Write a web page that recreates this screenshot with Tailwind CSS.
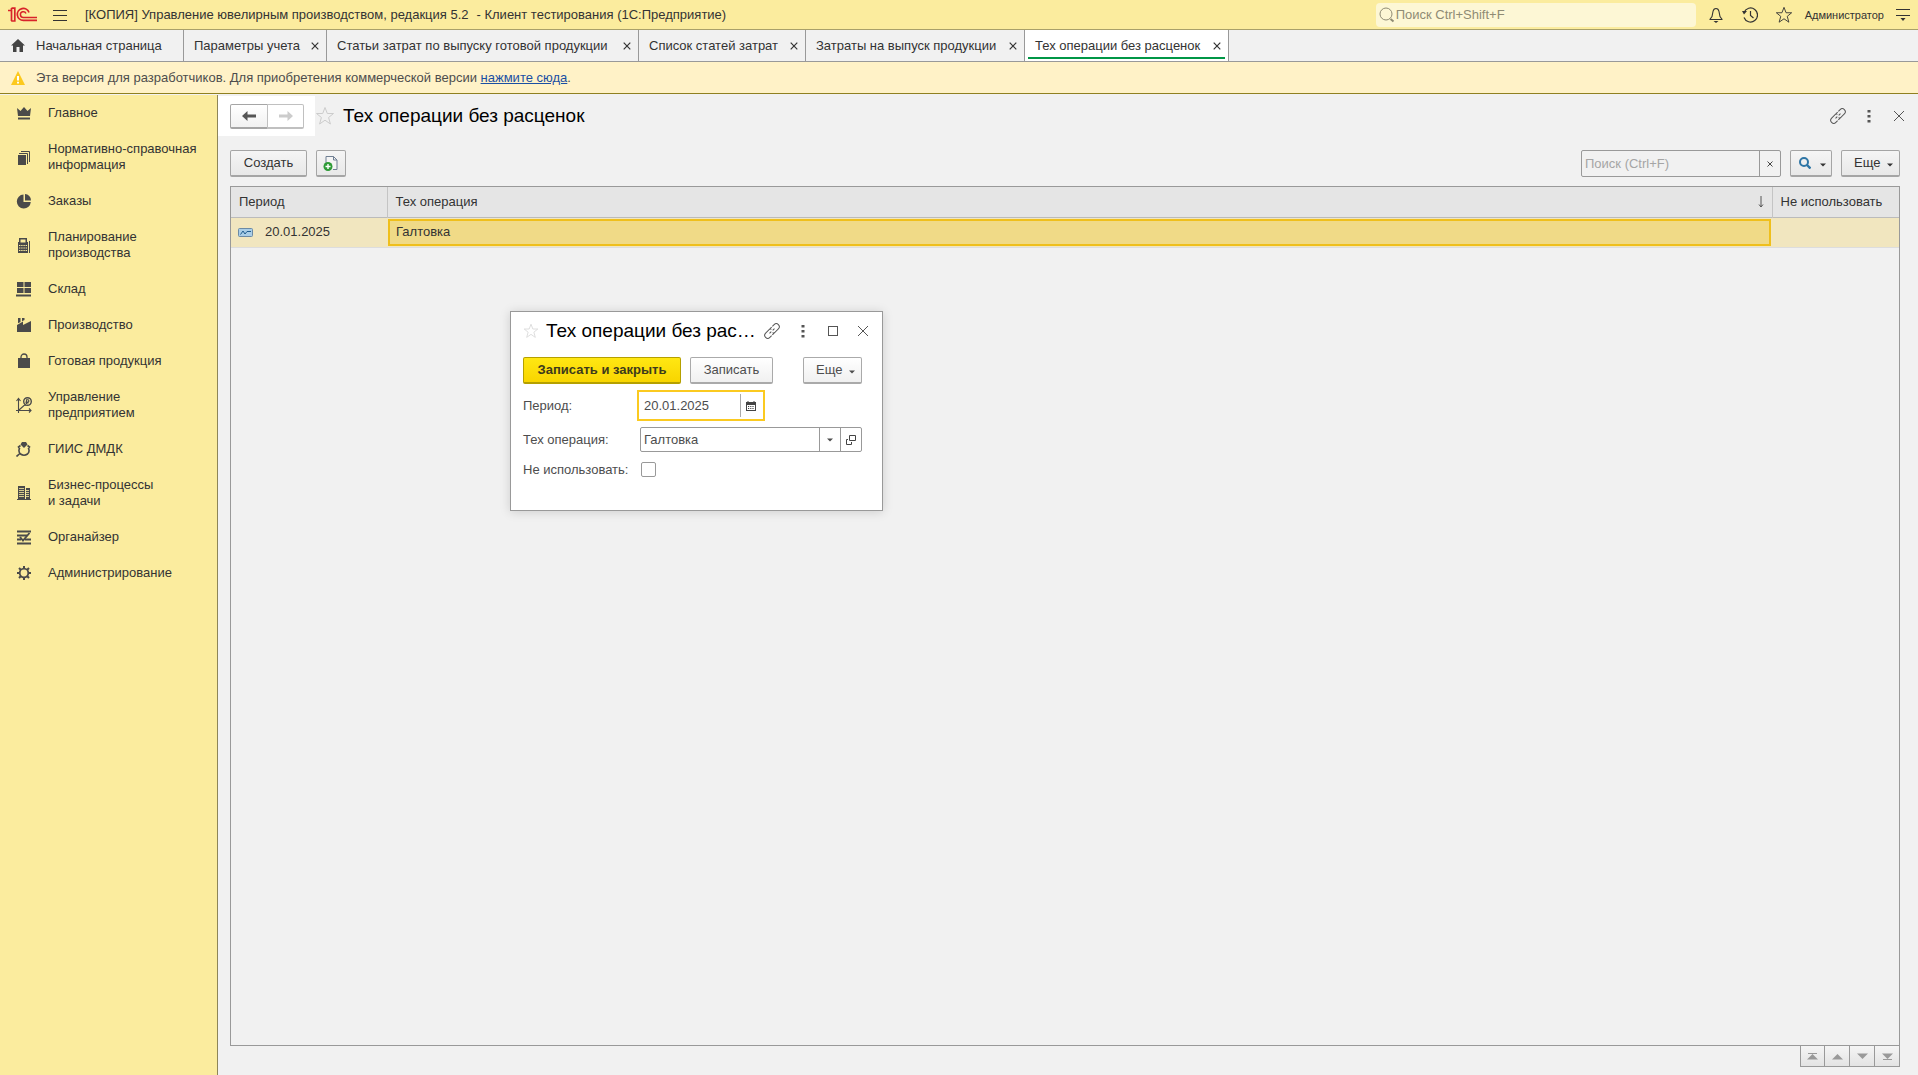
<!DOCTYPE html>
<html lang="ru">
<head>
<meta charset="utf-8">
<title>Тех операции без расценок</title>
<script src="https://cdn.jsdelivr.net/npm/@tailwindcss/browser@4"></script>
</head>
<body class="flex h-screen flex-col overflow-hidden bg-[#f1f1f1] font-['Liberation_Sans',Arial,sans-serif] text-[13px] leading-4 text-[#333]">
<svg class="hidden">
  <symbol id="star" viewBox="0 0 20 20"><path d="M10 1.500l2.300 6h6.200l-4.900 4 1.800 6.500-5.400-3.800L4.600 18l1.800-6.500-4.900-4h6.200z" fill="none" stroke="currentColor" stroke-linejoin="miter"/></symbol>
  <symbol id="link" viewBox="0 0 16 16"><g fill="none" stroke="currentColor" transform="rotate(-45 8 8)"><path d="M7.500 5.500V5H2a3 3 0 0 0 0 6h2.500M5.500 11h2v-1.500"/><path d="M8.500 10.500V11H14a3 3 0 0 0 0-6h-2.500M10.500 5h-2v1.500"/><path d="M4.500 8h2.500M9 8h2.500"/></g></symbol>
  <symbol id="dots" viewBox="0 0 4 14"><path d="M.5 1h3v2.500h-3zM.5 6h3v2.500h-3zM.5 11h3v2.500h-3z" fill="currentColor"/></symbol>
  <symbol id="cross" viewBox="0 0 12 12"><path d="M1 1l10 10M11 1L1 11" fill="none" stroke="currentColor"/></symbol>
  <symbol id="tabcross" viewBox="0 0 8 8"><path d="M.7.7l6.600 6.600M7.300.7L.7 7.300" fill="none" stroke="currentColor" stroke-width="1.200"/></symbol>
  <symbol id="caret" viewBox="0 0 6 4"><path d="M0 .5h6L3 3.500z" fill="currentColor"/></symbol>
</svg>

<header class="flex h-[30px] shrink-0 items-center border-b border-[#a8a06a] bg-[#fbec9e] pr-2 pl-2">
  <svg class="h-[15px] w-[30px] shrink-0" viewBox="0 0 30 15" fill="none" stroke="#d8232a"><path d="M0 3.500h4M3.500 1v13M3.500 1.200h3.300V14H3.200" stroke-width="1.700"/><path d="M21 5.500A6 6 0 1 0 15.500 13.400H29" stroke-width="1.700"/><path d="M18 6.500a2.900 2.900 0 1 0-2.700 4H29" stroke-width="1.500"/></svg>
  <button aria-label="Меню" class="ml-[15px]"><svg class="h-3 w-[14px]" viewBox="0 0 14 12"><path d="M0 1.500h14M0 6.500h14M0 11.500h14" stroke="#333"/></svg></button>
  <div class="ml-[18px] flex gap-2 whitespace-nowrap"><span>[КОПИЯ] Управление ювелирным производством, редакция 5.2</span><span>- Клиент тестирования (1С:Предприятие)</span></div>
  <label class="ml-auto flex h-6 w-[320px] items-center rounded-sm bg-[#fdf7d5] pl-[3px] text-[#8f8b74]">
    <svg class="h-4 w-4 shrink-0" viewBox="0 0 16 16" fill="none" stroke="currentColor"><circle cx="7" cy="7" r="6"/><path d="M11.500 12l3 2.500" stroke-width="2"/></svg>
    <input type="text" aria-label="Поиск" placeholder="Поиск Ctrl+Shift+F" class="min-w-0 flex-1 pl-px outline-none placeholder:text-[#8f8b74]">
  </label>
  <button aria-label="Уведомления" class="ml-[12px]"><svg class="h-4 w-4" viewBox="0 0 16 16" fill="none" stroke="#333" stroke-width="1.100"><path d="M1.500 12.500h13M2 12.300L4 9.500 5 4.500Q5.600 1.500 8 1.500t3 3l1 5 2 2.800"/><path d="M5.500 14h5L8 16z" fill="#333" stroke="none"/></svg></button>
  <button aria-label="История" class="ml-[18px]"><svg class="h-4 w-4" viewBox="0 0 16 16" fill="none" stroke="#333" stroke-width="1.200"><path d="M2 5.500a7 7 0 1 1 0 5" /><path d="M8.500 4v4.500l3 2.500"/><path d="M0 4h5L2 7.500z" fill="#333" stroke="none"/></svg></button>
  <button aria-label="Избранное" class="ml-[17px] text-[#333]"><svg class="h-[18px] w-[18px]"><use href="#star"/></svg></button>
  <a href="#" class="ml-3 text-[11px]">Администратор</a>
  <button aria-label="Настройки" class="ml-[12px]"><svg class="h-3 w-[14px]" viewBox="0 0 14 12"><path d="M0 .5h14M0 6.500h14" stroke="#333"/><path d="M4.500 9h5L7 12z" fill="#333"/></svg></button>
</header>

<nav class="flex h-8 shrink-0 border-b border-[#999] whitespace-nowrap">
  <a href="#" class="flex w-[184px] items-center gap-[11px] border-r border-[#999] pl-[11px]"><svg class="h-[13px] w-[14px]" viewBox="0 0 14 13"><path d="M7 0l7 6.500h-2V13H8.500V8h-3v5H2V6.500H0z" fill="#444"/></svg>Начальная страница</a>
  <a href="#" class="flex w-[143px] items-center justify-between border-r border-[#999] pr-[7px] pl-[10px]">Параметры учета<svg class="h-2 w-2"><use href="#tabcross"/></svg></a>
  <a href="#" class="flex w-[312px] items-center justify-between border-r border-[#999] pr-[7px] pl-[10px]">Статьи затрат по выпуску готовой продукции<svg class="h-2 w-2"><use href="#tabcross"/></svg></a>
  <a href="#" class="flex w-[167px] items-center justify-between border-r border-[#999] pr-[7px] pl-[10px]">Список статей затрат<svg class="h-2 w-2"><use href="#tabcross"/></svg></a>
  <a href="#" class="flex w-[219px] items-center justify-between border-r border-[#999] pr-[7px] pl-[10px]">Затраты на выпуск продукции<svg class="h-2 w-2"><use href="#tabcross"/></svg></a>
  <a href="#" class="flex w-[204px] border-r border-[#999] bg-white px-[3px] pb-[2px]"><span class="flex flex-1 items-center justify-between border-b-2 border-[#009646] pt-1 pr-1 pl-[7px]">Тех операции без расценок<svg class="h-2 w-2"><use href="#tabcross"/></svg></span></a>
</nav>

<div class="flex h-8 shrink-0 items-center gap-[11px] border-b border-[#8f8020] bg-[#fff2c7] pl-[11px] text-[#4d4d4d]">
  <svg class="h-[14px] w-[14px]" viewBox="0 0 14 14"><path d="M7 0l7 14H0z" fill="#fcc91e"/><path d="M6 5h2v4.500H6zM6 10.700h2v1.800H6z" fill="#fff"/></svg>
  <p>Эта версия для разработчиков. Для приобретения коммерческой версии <a href="#" class="text-[#1a4fa3] underline">нажмите сюда</a>.</p>
</div>

<div class="flex min-h-0 flex-1 pt-px">
  <aside class="w-[218px] shrink-0 border-r border-[#8d8558] bg-[#fbec9e] pt-[10px] text-[#333]">
    <ul class="flex flex-col gap-5 pl-4 [&_a]:flex [&_a]:items-center [&_a]:gap-4 [&_svg]:h-4 [&_svg]:w-4 [&_svg]:shrink-0 [&_svg]:text-[#4a4a4a]">
      <li><a href="#"><svg viewBox="0 0 16 16" fill="currentColor"><path d="M1 3l3.500 3L8 2l3.500 4L15 3l-1 8H2zM2 12.500h12v2H2z"/></svg>Главное</a></li>
      <li><a href="#"><svg viewBox="0 0 16 16"><path d="M2 6h8v10H2z" fill="currentColor"/><path d="M3 4.500h8.500V15M5 2.500h8.500V13" fill="none" stroke="currentColor"/></svg><span>Нормативно-справочная<br>информация</span></a></li>
      <li><a href="#"><svg viewBox="0 0 16 16" fill="currentColor"><path d="M7.500 1.500a7 7 0 1 0 7.300 7.500H7.500z"/><path d="M9 1v6.500h6A6.500 6.500 0 0 0 9 1z"/></svg>Заказы</a></li>
      <li><a href="#"><svg viewBox="0 0 16 16"><path d="M3 1h8v4h1v11H2V5h1z" fill="currentColor"/><path d="M4.500 2.500h5v3h-5z" fill="#fbec9e"/><path d="M3 8.500h8M3 11h8M3 13.500h8" stroke="#fbec9e" stroke-width="1.200" stroke-dasharray="1.400 .8"/><path d="M13.500 4v12" stroke="currentColor"/></svg><span>Планирование<br>производства</span></a></li>
      <li><a href="#"><svg viewBox="0 0 16 16" fill="currentColor"><path d="M1 1h6.500v5H1zM8.500 1H15v5H8.500zM1 7h6.500v5H1zM8.500 7H15v5H8.500zM0 13.500h15v2H0z"/></svg>Склад</a></li>
      <li><a href="#"><svg viewBox="0 0 16 16" fill="currentColor"><path d="M1 15V8l6-3.500V8l8-4v11z"/><path d="M2 1h2.500v4L2 6.300zM6 1h2.500v2L6 4.300z"/></svg>Производство</a></li>
      <li><a href="#"><svg viewBox="0 0 16 16"><path d="M2 5h12v10H2z" fill="currentColor"/><path d="M5 7V4a3 3 0 0 1 6 0V7" fill="none" stroke="currentColor" stroke-width="1.300"/></svg>Готовая продукция</a></li>
      <li><a href="#"><svg viewBox="0 0 16 16" fill="none" stroke="currentColor" stroke-width="1.100"><path d="M2.500 16V2M0 13.500h15M3 13l5-4.500 2-.5M.5 4l2-2.500 2 2.500M13 11.500l2 2-2 2"/><circle cx="11.500" cy="4.500" r="3.800" stroke-width="1.400"/><path d="M10.500 7V2.800h1.800q1.200 1.200 0 2.200H9.500M9.500 6h3"/></svg><span>Управление<br>предприятием</span></a></li>
      <li><a href="#"><svg viewBox="0 0 16 16"><path d="M4.500 4.500L2.500 6l1 1.500Q2 10.500 4.500 13 8 15.500 11.500 13 14 10.500 12.500 7.500l1-1.500-2-1.500M4.500 12L.5 15.500" fill="none" stroke="currentColor" stroke-width="1.600"/><path d="M6 1h4l1.500 2.500L8 7 4.500 3.500z" fill="currentColor"/></svg>ГИИС ДМДК</a></li>
      <li><a href="#"><svg viewBox="0 0 16 16"><path d="M2 1h7v13H2zM10 3h4v11h-4zM1 14h14v1H1z" fill="currentColor"/><path d="M3 3.500h5M3 5.500h5M3 7.500h5M3 9.500h5M3 11.500h5M10 5.500h3M10 7.500h3M10 9.500h3M10 11.500h3" stroke="#fbec9e" stroke-width=".8"/></svg><span>Бизнес-процессы<br>и задачи</span></a></li>
      <li><a href="#"><svg viewBox="0 0 16 16" fill="none" stroke="currentColor" stroke-width="1.900"><path d="M1 2.500h14M1 6.500h10M1 10.500h4M9 10.500h6M1 14.500h14"/><path d="M4 8l3 3.500L13.500 4"/></svg>Органайзер</a></li>
      <li><a href="#"><svg viewBox="0 0 16 16" fill="none" stroke="currentColor"><circle cx="8" cy="8" r="4.300" stroke-width="1.800"/><path d="M8 1v2.500M8 12.500V15M1 8h2.500M12.500 8H15M3 3l2 2M11 11l2 2M13 3l-2 2M5 11l-2 2" stroke-width="2"/></svg>Администрирование</a></li>
    </ul>
  </aside>

  <main class="flex min-w-0 flex-1 flex-col pt-px pr-[18px] pb-2">
    <div class="flex h-10 shrink-0 items-center">
      <div class="flex h-10 w-[97px] items-center bg-white pl-3">
        <button aria-label="Назад" class="flex h-[25px] w-[38px] items-center justify-center rounded-l-xs border border-b-2 border-[#a5a5a5] bg-linear-to-b from-white to-[#f1f1f1]"><svg class="h-3 w-[14px]" viewBox="0 0 14 12"><path d="M0 6l5.500-5v3.500H14v3H5.500V11z" fill="#555"/></svg></button>
        <button aria-label="Вперед" disabled class="-ml-px flex h-[25px] w-[37px] items-center justify-center rounded-r-xs border border-b-2 border-[#c0c0c0] bg-white"><svg class="h-3 w-[14px]" viewBox="0 0 14 12"><path d="M14 6L8.500 1v3.500H0v3h8.500V11z" fill="#ccc"/></svg></button>
      </div>
      <button aria-label="В избранное" class="text-[#ccc]"><svg class="h-5 w-5"><use href="#star"/></svg></button>
      <h1 class="ml-2 text-[19px] leading-6 text-black">Тех операции без расценок</h1>
      <div class="-mr-2 ml-auto flex items-center text-[#555]">
        <button aria-label="Ссылка"><svg class="h-4 w-4"><use href="#link"/></svg></button>
        <button aria-label="Действия" class="ml-[21px]"><svg class="h-[14px] w-1"><use href="#dots"/></svg></button>
        <button aria-label="Закрыть" class="mr-[3px] ml-[22px]"><svg class="h-3 w-3"><use href="#cross"/></svg></button>
      </div>
    </div>

    <div class="mt-[14px] ml-3 flex h-[27px] shrink-0 items-stretch">
      <button class="w-[77px] rounded-xs border border-b-2 border-[#a5a5a5] bg-linear-to-b from-[#f5f5f5] to-[#e8e8e8]">Создать</button>
      <button aria-label="Создать копированием" class="ml-[9px] flex w-[30px] items-center justify-center rounded-xs border border-b-2 border-[#a5a5a5] bg-linear-to-b from-[#f5f5f5] to-[#e8e8e8]"><svg class="h-4 w-4" viewBox="0 0 16 16"><path d="M3 8V1.500h7.500L14 5v9.500h-4" fill="#f4f4f4" stroke="#6f7f93"/><path d="M10.500 1.500V5H14" fill="none" stroke="#6f7f93"/><circle cx="5" cy="11.500" r="4.500" fill="#2c9a35"/><path d="M5 9v5M2.500 11.500h5" stroke="#fff" stroke-width="1.400"/></svg></button>
      <div class="ml-auto flex w-[200px] rounded-xs border border-[#999]">
        <input type="text" aria-label="Поиск по списку" placeholder="Поиск (Ctrl+F)" class="min-w-0 flex-1 pl-[3px] outline-none placeholder:text-[#a5a5a5]">
        <button aria-label="Очистить" class="flex w-[21px] items-center justify-center border-l border-[#999]"><svg class="h-[6px] w-[6px]" viewBox="0 0 12 12"><path d="M1 1l10 10M11 1L1 11" stroke="#444" stroke-width="2"/></svg></button>
      </div>
      <button aria-label="Найти" class="ml-[9px] flex w-[42px] items-center gap-[9px] rounded-xs border border-b-2 border-[#a5a5a5] bg-linear-to-b from-[#f5f5f5] to-[#e8e8e8] pl-2"><svg class="h-3 w-3" viewBox="0 0 12 12" fill="none" stroke="#2e75a5"><circle cx="5" cy="5" r="4" stroke-width="2"/><path d="M8 8l3.500 3.500" stroke-width="2.400"/></svg><svg class="mt-1 h-1 w-[6px]"><use href="#caret"/></svg></button>
      <button class="ml-[9px] flex w-[59px] items-center gap-[7px] rounded-xs border border-b-2 border-[#a5a5a5] bg-linear-to-b from-[#f5f5f5] to-[#e8e8e8] pl-3">Еще<svg class="mt-1 h-1 w-[6px]"><use href="#caret"/></svg></button>
    </div>

    <div class="mt-[9px] ml-3 min-h-0 flex-1 border border-[#999]">
      <table class="w-full table-fixed border-collapse text-left">
        <colgroup><col class="w-[156px]"><col><col class="w-[127px]"></colgroup>
        <thead class="bg-[#e5e5e5]">
          <tr class="h-[30px] border-b border-[#bbb]">
            <th class="border-r border-[#c4c4c4] pl-2 font-normal">Период</th>
            <th class="border-r border-[#c4c4c4] pr-2 pl-2 font-normal"><span class="flex items-center justify-between">Тех операция<svg class="h-3 w-[6px]" viewBox="0 0 6 12"><path d="M3 0v11M1 8.500l2 2.500 2-2.500" fill="none" stroke="#555"/></svg></span></th>
            <th class="pl-2 font-normal whitespace-nowrap">Не использовать</th>
          </tr>
        </thead>
        <tbody>
          <tr class="h-[30px] border-b border-[#ddd] bg-[#f1e6bf]">
            <td class="pl-[7px]"><span class="flex items-center gap-3"><svg class="h-[9px] w-[15px]" viewBox="0 0 15 9"><rect x=".5" y=".5" width="14" height="8" rx="1" fill="#a9cde6" stroke="#6b8aa5"/><path d="M2.500 6.500L5 3l2 3 2-2.500h4" fill="none" stroke="#1f5d8f"/></svg>20.01.2025</span></td>
            <td class="p-px"><div class="flex h-[27px] items-center border-2 border-[#efbf1c] bg-[#f0da87] pl-[6px]">Галтовка</div></td>
            <td></td>
          </tr>
        </tbody>
      </table>
    </div>
    <div class="flex h-[21px] shrink-0 justify-end text-[#999] [&>button]:flex [&>button]:w-[25px] [&>button]:items-center [&>button]:justify-center [&>button]:border-r [&>button]:border-b [&>button]:border-[#999] [&>button]:bg-linear-to-b [&>button]:from-[#f5f5f5] [&>button]:to-[#e3e3e3]">
      <button aria-label="В начало" class="border-l"><svg class="h-[7px] w-[11px]" viewBox="0 0 11 7"><path d="M1 .5h9" stroke="currentColor"/><path d="M0 6.500h11L5.500 1z" fill="currentColor"/></svg></button>
      <button aria-label="Вверх"><svg class="h-[7px] w-[11px]" viewBox="0 0 11 7"><path d="M0 6.500h11L5.500 1z" fill="currentColor"/></svg></button>
      <button aria-label="Вниз"><svg class="h-[7px] w-[11px]" viewBox="0 0 11 7"><path d="M0 .5h11L5.500 6z" fill="currentColor"/></svg></button>
      <button aria-label="В конец"><svg class="h-[7px] w-[11px]" viewBox="0 0 11 7"><path d="M1 6.500h9" stroke="currentColor"/><path d="M0 .5h11L5.500 6z" fill="currentColor"/></svg></button>
    </div>
  </main>
</div>

<section role="dialog" aria-label="Тех операции без расценок" class="absolute top-[311px] left-[510px] h-[200px] w-[373px] border border-[#999] bg-white px-3 text-[#4d4d4d] shadow-[0_1px_10px_rgba(0,0,0,0.15)]">
  <div class="flex h-[38px] items-center text-[#555]">
    <button aria-label="В избранное" class="text-[#d5d5d5]"><svg class="h-4 w-4"><use href="#star"/></svg></button>
    <h2 class="ml-[7px] w-[218px] text-[19px] leading-6 whitespace-nowrap text-black">Тех операции без рас…</h2>
    <button aria-label="Ссылка"><svg class="h-4 w-4"><use href="#link"/></svg></button>
    <button aria-label="Действия" class="ml-[21px]"><svg class="h-[14px] w-1"><use href="#dots"/></svg></button>
    <button aria-label="Развернуть" class="ml-[23px] h-[10px] w-[10px] border border-[#555]"></button>
    <button aria-label="Закрыть" class="ml-[19px]"><svg class="h-3 w-3"><use href="#cross"/></svg></button>
  </div>
  <div class="mt-[7px] flex h-[27px]">
    <button class="w-[158px] rounded-xs border border-b-2 border-[#b5a000] bg-linear-to-b from-[#ffe712] to-[#f8d500] font-bold whitespace-nowrap text-[#3d3a1c]">Записать и закрыть</button>
    <button class="ml-[9px] w-[83px] rounded-xs border border-b-2 border-[#aaa] bg-linear-to-b from-white to-[#f0f0f0]">Записать</button>
    <button class="ml-[30px] flex w-[59px] items-center gap-[7px] rounded-xs border border-b-2 border-[#aaa] bg-linear-to-b from-white to-[#f0f0f0] pl-3">Еще<svg class="mt-1 h-1 w-[6px]"><use href="#caret"/></svg></button>
  </div>
  <div class="mt-[6px] flex h-[31px] items-center">
    <label for="period" class="w-[114px]">Период:</label>
    <div class="flex h-[31px] w-[128px] border-2 border-[#fbca20] py-[2px]">
      <input id="period" type="text" value="20.01.2025" class="min-w-0 flex-1 pl-[5px] outline-none">
      <button aria-label="Календарь" class="flex w-[23px] items-center justify-start border-l border-[#aaa] pl-[5px]"><svg class="h-[10px] w-[10px]" viewBox="0 0 10 10"><path d="M0 1h10v9H0z" fill="#444"/><path d="M2 0v2M8 0v2" stroke="#444"/><path d="M1 4h8v5H1z" fill="#fff"/><path d="M2 5.500h6M2 7.500h6" stroke="#444" stroke-dasharray="1.200 1"/></svg></button>
    </div>
  </div>
  <div class="mt-[6px] flex h-[25px] items-center">
    <label for="operation" class="w-[117px]">Тех операция:</label>
    <div class="flex h-[25px] w-[222px] rounded-xs border border-[#999]">
      <input id="operation" type="text" value="Галтовка" class="min-w-0 flex-1 pl-[3px] outline-none">
      <button aria-label="Выбрать" class="flex w-[21px] items-center justify-center border-l border-[#999]"><svg class="h-1 w-[6px]"><use href="#caret"/></svg></button>
      <button aria-label="Открыть" class="flex w-[21px] items-center justify-center border-l border-[#999]"><svg class="h-[10px] w-[10px]" viewBox="0 0 10 10" fill="none" stroke="#444"><path d="M3.500.5h6v5h-6zM2 4.500H.5v5h5V7"/></svg></button>
    </div>
  </div>
  <div class="mt-[10px] flex h-[15px] items-center">
    <label for="unused" class="w-[118px] whitespace-nowrap">Не использовать:</label>
    <input id="unused" type="checkbox" class="h-[15px] w-[15px] appearance-none rounded-xs border border-[#999] bg-white">
  </div>
</section>
</body>
</html>
